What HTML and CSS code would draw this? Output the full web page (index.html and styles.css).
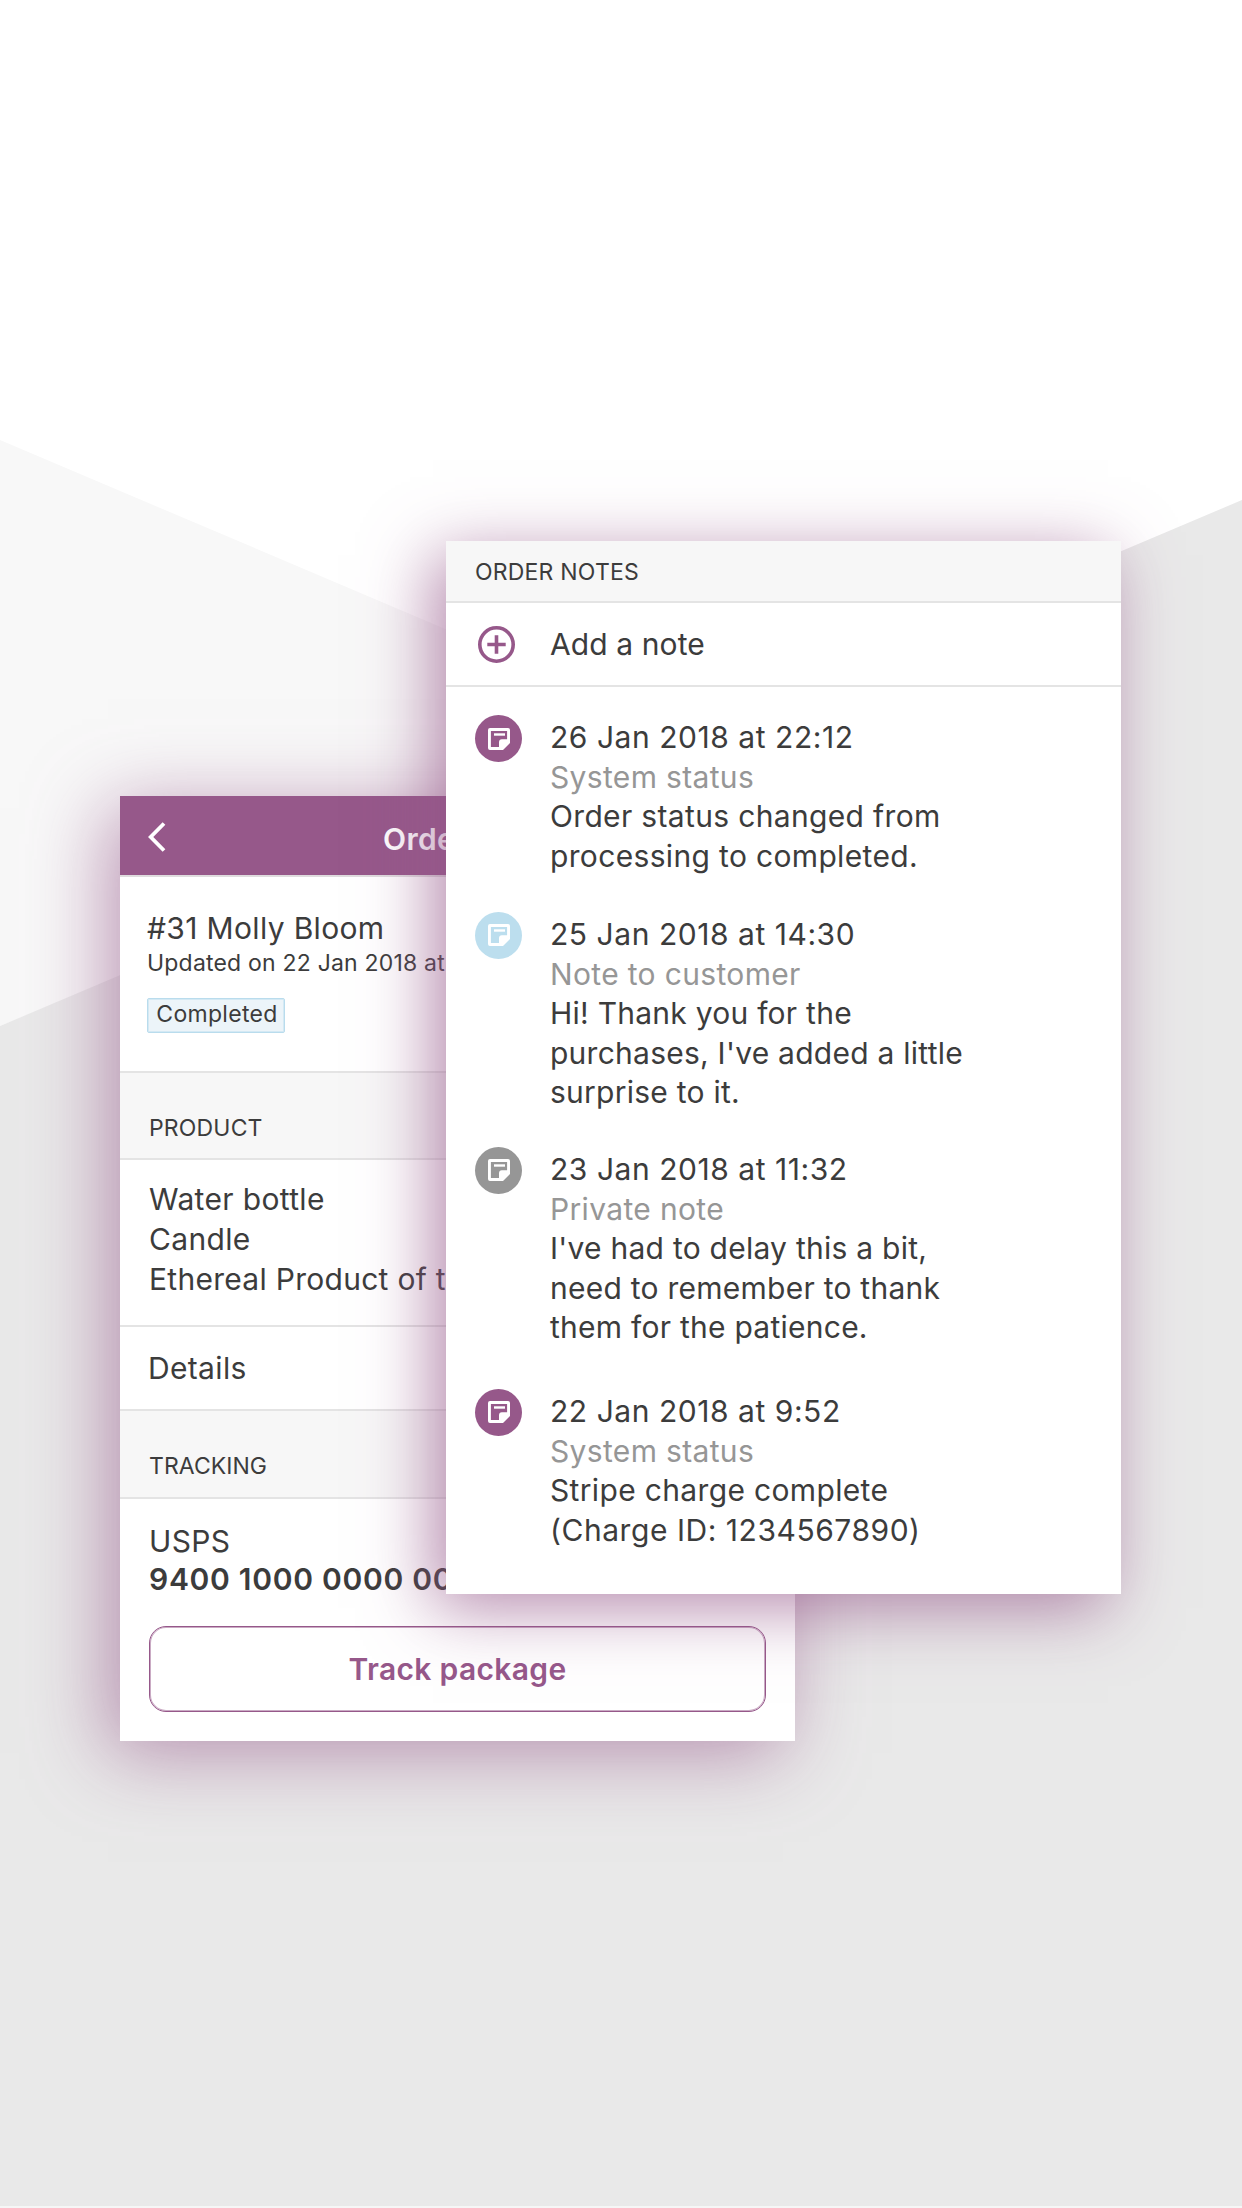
FILE: index.html
```
<!DOCTYPE html>
<html lang="en">
<head>
<meta charset="utf-8">
<title>Order notes</title>
<link rel="stylesheet" href="styles.css">
</head>
<body>
<svg class="defs" width="0" height="0" aria-hidden="true">
  <symbol id="note-icon" viewBox="0 0 22 22">
    <path fill-rule="evenodd" d="M2 0H20a2 2 0 0 1 2 2V15L15 22H2a2 2 0 0 1-2-2V2a2 2 0 0 1 2-2ZM2.9 2.9V18.9H11V14.2q0-2.9 2.9-2.9H19.1V2.9Z"/>
    <path d="M6 5.3H17V7.7H6Z"/>
  </symbol>
</svg>
<main class="scene">
  <svg class="backdrop" viewBox="0 0 1242 2208" aria-hidden="true">
    <path fill="#f8f8f8" d="M0 440L700 737L0 1026Z"/>
    <path fill="#e9e9e9" d="M0 1026L1242 500V2206H0Z"/>
    <path fill="#f6f6f6" d="M0 2206H1242V2208H0Z"/>
  </svg>

  <section class="card order">
    <header class="bar">
      <svg class="back" viewBox="0 0 18 30"><path d="M16 1.5L2.7 15L16 28.5"/></svg>
      <h1 class="title">Order #31</h1>
    </header>
    <div class="summary">
      <div class="name">#31 Molly Bloom</div>
      <div class="updated">Updated on 22 Jan 2018 at</div>
      <span class="badge">Completed</span>
    </div>
    <h2 class="section">PRODUCT</h2>
    <div class="products">
      <div class="item">Water bottle</div>
      <div class="item">Candle</div>
      <div class="item item-long">Ethereal Product of the</div>
    </div>
    <div class="details">Details</div>
    <h2 class="section section-tracking">TRACKING</h2>
    <div class="tracking">
      <div class="carrier">USPS</div>
      <div class="number">9400 1000 0000 0000</div>
      <button class="track">Track package</button>
    </div>
  </section>

  <section class="card notes">
    <h2 class="notes-head">ORDER NOTES</h2>
    <div class="add">
      <svg class="plus" viewBox="0 0 37 37"><circle cx="18.5" cy="18.5" r="16.7"/><path d="M18.5 9.3V27.7M9.3 18.5H27.7"/></svg>
      <span>Add a note</span>
    </div>
    <div class="list">
      <article class="note system">
        <div class="dot"><svg><use href="#note-icon"/></svg></div>
        <div class="body">
          <div class="date">26 Jan 2018 at 22:12</div>
          <div class="kind">System status</div>
          <div class="text">Order status changed from<br>processing to completed.</div>
        </div>
      </article>
      <article class="note customer">
        <div class="dot"><svg><use href="#note-icon"/></svg></div>
        <div class="body">
          <div class="date">25 Jan 2018 at 14:30</div>
          <div class="kind">Note to customer</div>
          <div class="text tight">Hi! Thank you for the<br>purchases, I've added a little<br>surprise to it.</div>
        </div>
      </article>
      <article class="note private">
        <div class="dot"><svg><use href="#note-icon"/></svg></div>
        <div class="body">
          <div class="date">23 Jan 2018 at 11:32</div>
          <div class="kind">Private note</div>
          <div class="text tight">I've had to delay this a bit,<br>need to remember to thank<br>them for the patience.</div>
        </div>
      </article>
      <article class="note system">
        <div class="dot"><svg><use href="#note-icon"/></svg></div>
        <div class="body">
          <div class="date">22 Jan 2018 at 9:52</div>
          <div class="kind">System status</div>
          <div class="text">Stripe charge complete<br><span class="charge">(Charge ID: 1234567890)</span></div>
        </div>
      </article>
    </div>
  </section>
</main>
</body>
</html>
```
FILE: styles.css
```
:root {
  --purple: #96588a;
  --ink: #3c3c3c;
  --line: #e4e4e4;
}

* { box-sizing: border-box; }

body {
  margin: 0;
  background: #fff;
  color: var(--ink);
  font: 400 30px/1.2 Inter, "Liberation Sans", sans-serif;
  letter-spacing: 0.34px;
}

h1, h2 { margin: 0; font-weight: 400; }

.defs { position: absolute; }

.scene {
  position: relative;
  width: 1242px;
  height: 2208px;
  overflow: hidden;
}

.backdrop { display: block; width: 100%; height: 100%; }

.card {
  position: absolute;
  width: 675px;
  background: #fff;
  white-space: nowrap;
}

/* Order card */
.order {
  left: 120px;
  top: 796px;
  height: 945px;
  box-shadow: -12px 12px 73px rgba(150, 88, 138, 0.62);
}

.bar {
  display: flex;
  align-items: center;
  height: 81px;
  padding: 3px 0 0 28px;
  background: var(--purple);
  border-bottom: 2px solid #dfdcde;
}

.back { width: 18px; height: 30px; fill: none; stroke: #fff; stroke-width: 3.8; }

.title {
  margin: 3px 0 0 217px;
  color: #fff;
  font-size: 30px;
  font-weight: 600;
}

.summary {
  height: 196px;
  padding: 33px 27px 0;
  border-bottom: 2px solid var(--line);
}

.name { line-height: 37px; }

.updated { font-size: 23px; line-height: 33px; letter-spacing: 0.2px; }

.badge {
  display: flex;
  align-items: center;
  justify-content: center;
  width: 138px;
  height: 35px;
  margin-top: 18px;
  padding: 0 0 2px 2px;
  background: #ecf4f9;
  border: 1px solid #b9dced;
  box-shadow: inset 0 0 0 1px rgba(185, 220, 237, 0.45);
  border-radius: 2px;
  font-size: 23px;
  letter-spacing: 0.3px;
}

.section {
  display: flex;
  align-items: center;
  height: 87px;
  padding: 26px 29px 0;
  background: #f7f7f7;
  border-bottom: 2px solid var(--line);
  font-size: 23px;
  letter-spacing: 0.17px;
}

.section-tracking { height: 88px; letter-spacing: 0.05px; }

.products {
  height: 167px;
  padding: 19px 29px 0;
  line-height: 40px;
  border-bottom: 2px solid var(--line);
}

.item-long { letter-spacing: 0.28px; }

.details {
  display: flex;
  align-items: center;
  height: 84px;
  padding: 0 28px;
  border-bottom: 2px solid var(--line);
}

.tracking {
  display: flex;
  flex-direction: column;
  padding: 23px 29px 0;
  line-height: 38px;
}

.number { font-weight: 600; letter-spacing: 0.7px; }

.track {
  height: 86px;
  margin-top: 28px;
  padding: 0;
  background: transparent;
  border: 1px solid var(--purple);
  box-shadow: inset 0 0 0 1px rgba(150, 88, 138, 0.5);
  border-radius: 17px;
  color: var(--purple);
  font: inherit;
  font-weight: 600;
  letter-spacing: 0.34px;
}

/* Notes card */
.notes {
  left: 446px;
  top: 541px;
  height: 1053px;
  box-shadow: -13px 14px 64px rgba(150, 88, 138, 0.7);
}

.notes-head {
  display: flex;
  align-items: center;
  height: 62px;
  padding: 3px 29px 0;
  background: #f7f7f7;
  border-bottom: 2px solid var(--line);
  font-size: 23px;
  letter-spacing: 0.2px;
}

.add {
  display: flex;
  align-items: center;
  gap: 35px;
  height: 84px;
  padding-left: 32px;
  border-bottom: 2px solid var(--line);
  letter-spacing: 0.1px;
}

.plus { width: 37px; height: 37px; fill: none; stroke: var(--purple); stroke-width: 3.6; }

.list { padding: 31px 29px 0; line-height: 39.6px; }

.note { display: flex; gap: 28px; margin-bottom: 38.6px; }
.note.customer { margin-bottom: 37px; }
.note.private { margin-bottom: 44px; }

.dot {
  display: flex;
  align-items: center;
  justify-content: center;
  width: 47px;
  height: 47px;
  margin-top: -3px;
  border-radius: 50%;
  background: var(--purple);
}

.dot svg { width: 22px; height: 22px; fill: #fff; }
.customer .dot { background: #bcdeee; }
.private .dot { background: #969696; }

.date, .charge { letter-spacing: 0.54px; }
.kind { color: #969696; }
.tight { letter-spacing: 0.25px; }
```
